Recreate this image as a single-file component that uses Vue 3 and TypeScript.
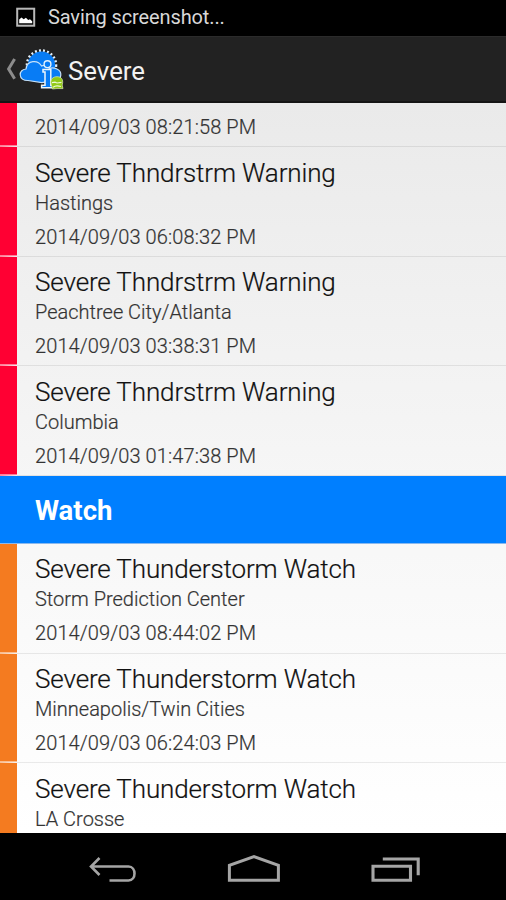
<script setup lang="ts">
interface Alert {
  title?: string
  place?: string
  time?: string
}

const warnings: Alert[] = [
  { title: 'Severe Thndrstrm Warning', place: 'Hastings', time: '2014/09/03 06:08:32 PM' },
  { title: 'Severe Thndrstrm Warning', place: 'Peachtree City/Atlanta', time: '2014/09/03 03:38:31 PM' },
  { title: 'Severe Thndrstrm Warning', place: 'Columbia', time: '2014/09/03 01:47:38 PM' },
]

const watches: Alert[] = [
  { title: 'Severe Thunderstorm Watch', place: 'Storm Prediction Center', time: '2014/09/03 08:44:02 PM' },
  { title: 'Severe Thunderstorm Watch', place: 'Minneapolis/Twin Cities', time: '2014/09/03 06:24:03 PM' },
  { title: 'Severe Thunderstorm Watch', place: 'LA Crosse' },
]
</script>

<template>
  <div class="screen">
    <div class="status">
      <svg class="picture" width="20" height="20" viewBox="0 0 20 20">
        <rect x="1.2" y="1.7" width="17" height="17" fill="none" stroke="#b8b8b8" stroke-width="2" />
        <path d="M3.2 16.3v-3.7l2.3-2 2.2 1.6 2.2-1.4 2.3 2.2 1.8-.8 2.2 2v2.1z" fill="#fff" />
      </svg>
      <span class="status-text">Saving screenshot...</span>
    </div>
    <header class="bar">
      <svg class="up" width="12" height="24" viewBox="0 0 12 24">
        <path d="M9.6 2 3.6 11.9 9.6 21.8" fill="none" stroke="#8c8c8c" stroke-width="3" />
      </svg>
      <svg class="logo" width="46" height="44" viewBox="0 0 46 44">
        <circle cx="22.5" cy="18" r="14.2" fill="none" stroke="#e6f1fb" stroke-width="3.2" stroke-dasharray="1.9 2.1" />
        <circle cx="22.5" cy="18" r="13.6" fill="#087cf5" />
        <path d="M9 33.5C-1 33.5-1 22.5 7 22 8 13 19 12.5 22.5 19c3-1.4 7 0 7.8 2.6 4.5-2 12 1 11.5 6.5-.3 4-3 5.5-6 5.5l-13 2z" fill="#087cf5" stroke="#c5e1fa" stroke-width="1.2" />
        <circle cx="28.5" cy="17.2" r="3.4" fill="#087cf5" stroke="#e4f2fc" stroke-width="1.4" />
        <path d="M24 22.5h7.8v16h3.2v2.3H22.6v-2.6H26V25h-2z" fill="#087cf5" stroke="#eef6fb" stroke-width="1.5" />
        <path d="M32.4 38c-2-6 2-8.3 5.6-8.3s7 2 5.2 8.3l.8 3.6h-6l-4.6.4z" fill="#91c916" stroke="#dcebb0" stroke-width=".7" />
        <path d="M33 35.6l3-.4 2 .8 4.5-.6M34 40.3c2-1.8 5-1.8 8-.8" fill="none" stroke="#edf8d5" stroke-width="1.2" />
      </svg>
      <h1 class="heading">Severe</h1>
    </header>
    <main class="list">
      <div class="row red clipped">
        <div class="time">2014/09/03 08:21:58 PM</div>
      </div>
      <div v-for="item in warnings" :key="item.time" class="row red">
        <div class="title">{{ item.title }}</div>
        <div class="place">{{ item.place }}</div>
        <div class="time">{{ item.time }}</div>
      </div>
      <h2 class="section">Watch</h2>
      <div v-for="item in watches" :key="item.place" class="row orange">
        <div class="title">{{ item.title }}</div>
        <div class="place">{{ item.place }}</div>
        <div v-if="item.time" class="time">{{ item.time }}</div>
      </div>
    </main>
    <nav class="nav">
      <svg width="48" height="30" viewBox="0 0 48 30">
        <path d="M2 12.5h37.5c8 0 8 14 0 14H20.5M10.5 4 2 12.5l8.5 8.5" fill="none" stroke="#a5a5a5" stroke-width="2.6" />
      </svg>
      <svg width="54" height="30" viewBox="0 0 54 30">
        <path d="M2.4 26.2V11.4L27 2.6l24.4 8.8v14.8z" fill="none" stroke="#a5a5a5" stroke-width="3" />
      </svg>
      <svg width="50" height="30" viewBox="0 0 50 30">
        <path d="M2 12.2h37.5v14H2zM11.8 5h35.4v16.2" fill="none" stroke="#a5a5a5" stroke-width="3.1" />
      </svg>
    </nav>
  </div>
</template>

<style>
body {
  margin: 0;
  background: #000;
}
</style>

<style scoped>
.screen {
  display: flex;
  flex-direction: column;
  width: 506px;
  height: 900px;
  overflow: hidden;
  background: #000;
  font-family: Roboto, "Liberation Sans", sans-serif;
}
.status {
  display: flex;
  align-items: center;
  box-sizing: border-box;
  height: 36px;
  padding: 0 0 2px 16px;
  gap: 12px;
  color: #d8d8d8;
  font-size: 20px;
  letter-spacing: -0.12px;
  line-height: 24px;
}
.bar {
  display: flex;
  align-items: center;
  box-sizing: border-box;
  height: 67px;
  padding-left: 5px;
  background: #222;
  border-top: 1px solid #2b2b2b;
  border-bottom: 2px solid #151515;
}
.logo {
  margin-left: 2px;
}
.heading {
  margin: 3px 0 0 3px;
  color: #f2f2f2;
  font-size: 25.8px;
  font-weight: 400;
  line-height: 32px;
}
.list {
  height: 730px;
  overflow: hidden;
  background: linear-gradient(#eaeaea, #f7f7f7 56%, #fff);
}
.row {
  box-sizing: border-box;
  height: 109.67px;
  padding: 9.5px 0 0 18px;
  border-left: 17px solid #ff0033;
  border-bottom: 1px solid rgba(0, 0, 0, 0.08);
  color: #333;
  font-size: 20px;
  font-weight: 300;
  white-space: nowrap;
  position: relative;
  -webkit-text-stroke: 0.2px currentColor;
}
.row::after {
  content: "";
  position: absolute;
  left: -17px;
  bottom: -1px;
  width: 17px;
  height: 2px;
  background: rgba(255, 255, 255, 0.5);
}
.row.orange {
  border-left-color: #f47b20;
}
.row.clipped {
  height: 44px;
}
.title {
  color: #111;
  font-size: 26px;
  letter-spacing: -0.13px;
  line-height: 32px;
}
.place {
  line-height: 29px;
}
.time {
  margin-top: 5px;
  letter-spacing: 0.1px;
  line-height: 28px;
}
.clipped .time {
  margin-top: 0;
}
.section {
  box-sizing: border-box;
  height: 68px;
  margin: 0;
  padding-left: 35px;
  background: #007fff;
  border-bottom: 1px solid #8ab9ee;
  color: #fff;
  font-size: 27.5px;
  font-weight: 700;
  line-height: 70px;
}
.nav {
  display: flex;
  align-items: center;
  justify-content: space-between;
  height: 67px;
  padding: 4px 85px 0 89px;
  box-sizing: border-box;
}
</style>
